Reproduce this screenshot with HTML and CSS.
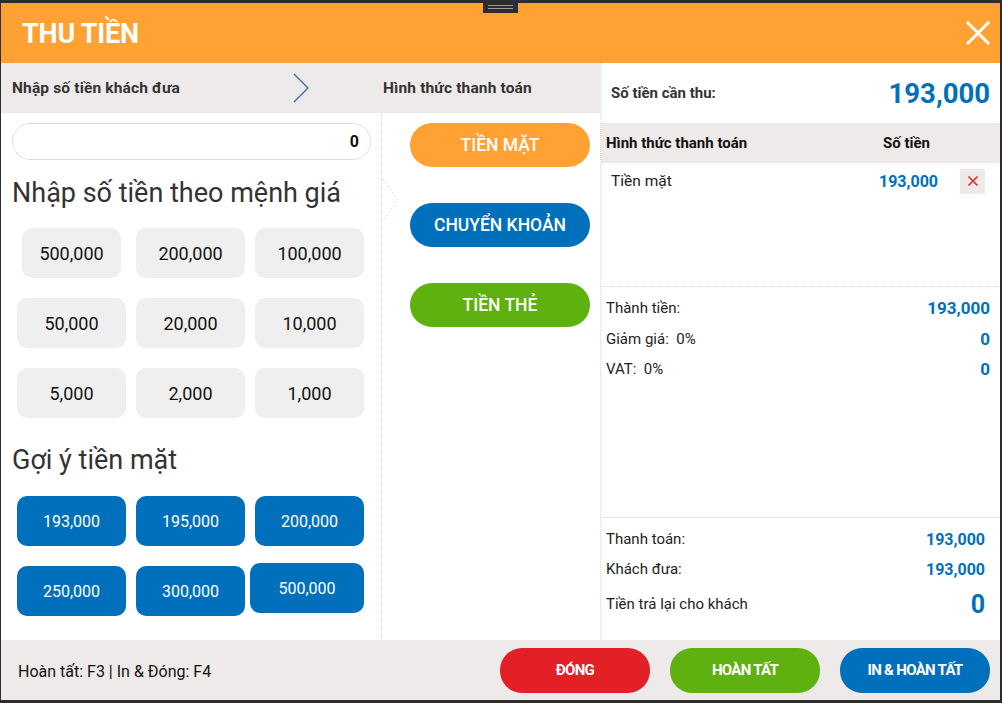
FILE: index.html
```html
<!DOCTYPE html>
<html lang="vi">
<head>
<meta charset="utf-8">
<title>Thu tiền</title>
<link rel="stylesheet" href="styles.css">
</head>
<body>
<div class="handle"><span></span><span></span></div>
<div class="dialog">
  <header class="header">
    <h1 class="title">THU TIỀN</h1>
    <svg class="close" width="24" height="24" viewBox="0 0 24 24"><path d="M2 2L22 22M22 2L2 22" stroke="#fff" stroke-width="3" stroke-linecap="square"/></svg>
  </header>
  <div class="main">
    <section class="left-area">
      <div class="steps">
        <span class="step step-one">Nhập số tiền khách đưa</span>
        <svg class="chev" width="16" height="30" viewBox="0 0 16 30"><path d="M1 1L15 15L1 29" fill="none" stroke="#3b6fb3" stroke-width="1.4"/></svg>
        <span class="step step-two">Hình thức thanh toán</span>
      </div>
      <div class="cols">
        <div class="denoms">
          <div class="amount-input">0</div>
          <h2 class="sec-title sec-first">Nhập số tiền theo mệnh giá</h2>
          <div class="grid">
            <button class="btn-gray narrow">500,000</button>
            <button class="btn-gray">200,000</button>
            <button class="btn-gray">100,000</button>
            <button class="btn-gray">50,000</button>
            <button class="btn-gray">20,000</button>
            <button class="btn-gray">10,000</button>
            <button class="btn-gray">5,000</button>
            <button class="btn-gray">2,000</button>
            <button class="btn-gray">1,000</button>
          </div>
          <h2 class="sec-title sec-second">Gợi ý tiền mặt</h2>
          <div class="grid">
            <button class="btn-blue">193,000</button>
            <button class="btn-blue">195,000</button>
            <button class="btn-blue">200,000</button>
            <button class="btn-blue">250,000</button>
            <button class="btn-blue">300,000</button>
            <button class="btn-blue shifted">500,000</button>
          </div>
        </div>
        <div class="methods">
          <svg class="notch" width="20" height="44" viewBox="0 0 20 44"><path d="M1 1L16 22L1 43" fill="none" stroke="#d6d6d6" stroke-width="1" stroke-dasharray="1.5 2.5"/></svg>
          <button class="pill pill-orange">TIỀN MẶT</button>
          <button class="pill pill-blue">CHUYỂN KHOẢN</button>
          <button class="pill pill-green">TIỀN THẺ</button>
        </div>
      </div>
    </section>
    <section class="right">
      <div class="due">
        <span class="due-label">Số tiền cần thu:</span>
        <span class="due-value">193,000</span>
      </div>
      <div class="thead">
        <span class="th-method">Hình thức thanh toán</span>
        <span class="th-amount">Số tiền</span>
      </div>
      <div class="tbody">
        <div class="trow">
          <span class="td-method">Tiền mặt</span>
          <span class="td-amount">193,000</span>
          <span class="del"><svg width="12" height="12" viewBox="0 0 12 12"><path d="M1.5 1.5L10.5 10.5M10.5 1.5L1.5 10.5" stroke="#e8262b" stroke-width="1.6"/></svg></span>
        </div>
      </div>
      <div class="summary">
        <div class="srow"><span>Thành tiền:</span><b class="val">193,000</b></div>
        <div class="srow"><span>Giảm giá:&nbsp; 0%</span><b class="val">0</b></div>
        <div class="srow"><span>VAT:&nbsp; 0%</span><b class="val">0</b></div>
      </div>
      <div class="totals">
        <div class="trow2"><span>Thanh toán:</span><b class="val">193,000</b></div>
        <div class="trow2"><span>Khách đưa:</span><b class="val">193,000</b></div>
        <div class="trow2 change"><span>Tiền trả lại cho khách</span><b class="val big">0</b></div>
      </div>
    </section>
  </div>
  <footer class="footer">
    <span class="hint">Hoàn tất: F3 | In &amp; Đóng: F4</span>
    <div class="actions">
      <button class="act act-red">ĐÓNG</button>
      <button class="act act-green">HOÀN TẤT</button>
      <button class="act act-blue">IN &amp; HOÀN TẤT</button>
    </div>
  </footer>
</div>
</body>
</html>
```

FILE: styles.css
```css
* { box-sizing: border-box; }
html, body { margin: 0; padding: 0; }
body {
  width: 1002px;
  height: 703px;
  background: #2c2c2c;
  font-family: Roboto, "Noto Sans", sans-serif;
  color: #222;
  position: relative;
  overflow: hidden;
}
button {
  font-family: inherit;
  border: none;
  cursor: pointer;
  padding: 0;
}
.handle {
  position: absolute;
  left: 483px;
  top: 0;
  width: 35px;
  height: 13px;
  background: #2d2d2d;
  display: flex;
  flex-direction: column;
  align-items: center;
  justify-content: center;
  gap: 2px;
  z-index: 2;
}
.handle span {
  display: block;
  width: 25px;
  height: 1px;
  background: #9a9a9a;
}
.dialog {
  margin: 3px 0 0 1px;
  width: 999px;
  height: 697px;
  display: flex;
  flex-direction: column;
  background: #fff;
}
.header {
  height: 60px;
  background: #ffa133;
  display: flex;
  align-items: center;
  justify-content: space-between;
  padding: 0 10px 0 21px;
}
.title {
  margin: 2px 0 0 0;
  color: #fff;
  font-size: 27px;
  font-weight: 700;
  letter-spacing: -0.2px;
}
.close { display: block; }
.main {
  height: 577px;
  display: flex;
}
.left-area {
  width: 599px;
  display: flex;
  flex-direction: column;
}
.steps {
  height: 50px;
  background: #eeeae9;
  display: flex;
  align-items: center;
  font-size: 15.5px;
  font-weight: 700;
  letter-spacing: 0.15px;
  color: #333;
}
.step-one { margin-left: 11px; width: 281px; }
.chev { display: block; }
.step-two { margin-left: 74px; }
.cols {
  flex: 1;
  display: flex;
}
.denoms {
  width: 380px;
  padding: 10px 0 0 0;
}
.amount-input {
  margin: 0 10px 0 11px;
  height: 37px;
  border: 1px dotted #bdbdbd;
  border-radius: 19px;
  display: flex;
  align-items: center;
  justify-content: flex-end;
  padding-right: 11px;
  font-size: 16px;
  font-weight: 700;
  color: #111;
}
.sec-title {
  margin: 0 0 0 11px;
  font-weight: 400;
  font-size: 27px;
  line-height: 30px;
  color: #333;
}
.sec-first { margin-top: 18px; margin-bottom: 20px; }
.sec-second { margin-top: 27px; margin-bottom: 21px; }
.grid {
  margin-left: 16px;
  display: grid;
  grid-template-columns: repeat(3, 109px);
  grid-auto-rows: 50px;
  column-gap: 10px;
  row-gap: 20px;
}
.btn-gray {
  background: #efefef;
  border-radius: 10px;
  font-size: 18px;
  color: #111;
}
.btn-gray.narrow { margin: 0 5px; }
.btn-blue {
  background: #0070bd;
  border-radius: 10px;
  font-size: 16px;
  color: #fff;
}
.btn-blue.shifted { margin: -3px 0 3px -5px; }
.methods {
  flex: 1;
  position: relative;
  border-left: 1px dotted #d4d4d4;
  padding: 10px 0 0 28px;
  display: flex;
  flex-direction: column;
  gap: 36px;
}
.notch {
  position: absolute;
  left: 0;
  top: 65px;
}
.pill {
  width: 180px;
  height: 44px;
  border-radius: 22px;
  color: #fff;
  font-size: 17.5px;
  font-weight: 500;
}
.pill-orange { background: #ffa133; }
.pill-blue { background: #0070bd; }
.pill-green { background: #5eb10e; }
.right {
  width: 400px;
  border-left: 1px dotted #dadada;
  display: flex;
  flex-direction: column;
}
.due {
  height: 60px;
  display: flex;
  align-items: center;
  justify-content: space-between;
  padding: 0 10px 0 10px;
}
.due-label { font-size: 15px; font-weight: 700; color: #333; }
.due-value {
  font-size: 27.5px;
  font-weight: 700;
  color: #0070bd;
}
.thead {
  height: 40px;
  background: #eeeae9;
  display: flex;
  align-items: center;
  padding-left: 5px;
  font-size: 15px;
  font-weight: 700;
  color: #111;
}
.th-method { width: 277px; }
.tbody {
  height: 124px;
  border-bottom: 1px dotted #d6d6d6;
  padding-top: 5px;
}
.trow {
  height: 26px;
  display: flex;
  align-items: center;
  padding-left: 10px;
}
.td-method { width: 258px; font-size: 15.5px; color: #222; }
.td-amount {
  width: 69px;
  text-align: right;
  font-size: 16px;
  font-weight: 700;
  color: #0070bd;
}
.del {
  margin-left: 22px;
  width: 25px;
  height: 25px;
  background: #eeeae9;
  display: flex;
  align-items: center;
  justify-content: center;
}
.summary {
  height: 231px;
  padding: 6px 10px 0 5px;
  border-bottom: 1px solid #e6e6e6;
}
.srow {
  height: 30.5px;
  display: flex;
  align-items: center;
  justify-content: space-between;
  font-size: 15px;
  color: #222;
}
.val {
  font-weight: 700;
  color: #0070bd;
  font-size: 17px;
}
.totals {
  padding: 6px 15px 0 5px;
}
.trow2 {
  height: 30px;
  display: flex;
  align-items: center;
  justify-content: space-between;
  font-size: 15px;
  color: #222;
}
.trow2 .val { font-size: 16px; }
.trow2.change { height: 40px; }
.trow2 .val.big { font-size: 25px; }
.footer {
  height: 60px;
  background: #eeeae9;
  display: flex;
  align-items: center;
  justify-content: space-between;
  padding: 0 10px 0 17px;
}
.hint { font-size: 16px; color: #111; margin-top: 2px; }
.actions { display: flex; gap: 20px; }
.act {
  width: 150px;
  height: 45px;
  border-radius: 22px;
  color: #fff;
  font-size: 15px;
  font-weight: 700;
  letter-spacing: -0.7px;
}
.act-red { background: #e22026; }
.act-green { background: #5eb10e; }
.act-blue { background: #0070bd; }
```
